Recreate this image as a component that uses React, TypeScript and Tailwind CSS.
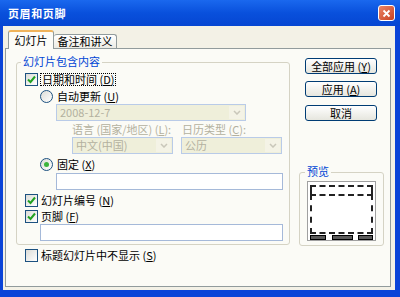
import React from "react";

const font = { fontFamily: '"Noto Sans CJK SC", "Noto Sans", sans-serif' };

function Check({ checked }: { checked?: boolean }) {
  return (
    <span className="flex h-[13px] w-[13px] shrink-0 items-center justify-center border border-[#1c5180] bg-gradient-to-br from-[#dcdcd7] to-white">
      {checked && (
        <svg width="9" height="9" viewBox="0 0 9 9">
          <path d="M1 4.5 L3.5 7 L8 1.5" fill="none" stroke="#21a121" strokeWidth="2" />
        </svg>
      )}
    </span>
  );
}

function Radio({ checked }: { checked?: boolean }) {
  return (
    <span className="flex h-[13px] w-[13px] shrink-0 items-center justify-center rounded-full border border-[#1c5180] bg-gradient-to-br from-[#dcdcd7] to-white">
      {checked && <span className="h-[5px] w-[5px] rounded-full bg-[#3cb43c]" />}
    </span>
  );
}

function Select({ value, className }: { value: string; className: string }) {
  return (
    <div className={`flex h-[17px] shrink-0 items-center border border-[#b9cbe8] bg-[#efefda] ${className}`}>
      <span className="flex-1 pl-[3px] text-[11px] leading-none text-[#b3b19f]">{value}</span>
      <span className="mr-[1px] flex h-[13px] w-[15px] items-center justify-center bg-[#f4f3e6]">
        <svg width="8" height="5" viewBox="0 0 8 5">
          <path d="M1 1 L4 4 L7 1" fill="none" stroke="#c9c7ba" strokeWidth="1.5" />
        </svg>
      </span>
    </div>
  );
}

function Button({ children, className }: { children: React.ReactNode; className: string }) {
  return (
    <div
      className={`flex h-[16px] w-[72px] items-center justify-center rounded-[3px] border border-[#003c74] bg-gradient-to-b from-white to-[#e6e6de] text-[11px] leading-none text-black ${className}`}
    >
      {children}
    </div>
  );
}

function Row({ children, className }: { children: React.ReactNode; className: string }) {
  return <div className={`flex h-[13px] shrink-0 items-center gap-[2px] ${className}`}>{children}</div>;
}

const Label = ({ children }: { children: React.ReactNode }) => (
  <span className="whitespace-nowrap text-[11px] leading-none text-black">{children}</span>
);

export default function App() {
  return (
    <div style={font} className="flex h-[297px] w-[400px] flex-col bg-[#0a44d8]">
      {/* Title bar */}
      <div className="flex h-[26px] shrink-0 items-center justify-between bg-gradient-to-b from-[#1a68ee] via-[#0950dc] to-[#0646d2] pl-[8px] pr-[5px]">
        <span className="text-[11px] font-bold leading-none tracking-[0.6px] text-white">页眉和页脚</span>
        <div className="flex h-[16px] w-[17px] items-center justify-center rounded-[3px] border border-white bg-gradient-to-br from-[#ea8466] to-[#c8401e]">
          <svg width="9" height="9" viewBox="0 0 9 9">
            <path d="M1.5 1.5 L7.5 7.5 M7.5 1.5 L1.5 7.5" stroke="white" strokeWidth="1.8" />
          </svg>
        </div>
      </div>

      {/* Body */}
      <div className="mb-[7px] ml-[3px] mr-[5px] flex flex-1 flex-col bg-[#f3f1e6] pl-[2px] pr-[1px] pt-[4px]">
        {/* Tabs */}
        <div className="flex h-[18px] shrink-0 items-end pl-[3px]">
          <div className="relative z-10 -mb-[1px] flex h-[19px] w-[46px] items-center justify-center rounded-t-[3px] border border-b-0 border-t-2 border-[#919b9c] border-t-[#f0b35a] bg-[#fcfcf8] text-[11px] leading-none">
            幻灯片
          </div>
          <div className="flex h-[14px] w-[63px] items-center justify-center rounded-t-[3px] border border-b-0 border-l-0 border-[#919b9c] bg-gradient-to-b from-white to-[#ecebe4] text-[11px] leading-none">
            备注和讲义
          </div>
        </div>

        {/* Tab panel */}
        <div className="flex h-[239px] w-[386px] shrink-0 border border-[#919b9c] bg-[#fbfbf6] pl-[10px]">
          {/* Left column */}
          <div className="flex w-[274px] shrink-0 flex-col">
            <div className="relative mt-[13px] flex h-[183px] shrink-0 flex-col rounded-[3px] border border-[#d5d3c4]">
              <span className="absolute -top-[7px] left-[4px] bg-[#fbfbf6] px-[2px] text-[11px] leading-none text-[#0046d5]">
                幻灯片包含内容
              </span>
              <Row className="ml-[8px] mt-[10px]">
                <Check checked />
                <span className="border border-dotted border-black px-[1px] text-[11px] leading-[11px]">
                  日期和时间 (<u>D</u>)
                </span>
              </Row>
              <Row className="ml-[23px] mt-[4px] gap-[4px]">
                <Radio />
                <Label>
                  自动更新 (<u>U</u>)
                </Label>
              </Row>
              <Select value="2008-12-7" className="ml-[39px] mt-[1px] w-[190px]" />
              <div className="ml-[55px] mt-[2px] flex h-[12px] shrink-0 items-center text-[11px] leading-none text-[#b3b19f]">
                <span className="w-[110px] whitespace-nowrap">语言 (国家/地区) (<u>L</u>):</span>
                <span className="whitespace-nowrap">日历类型 (<u>C</u>):</span>
              </div>
              <div className="ml-[55px] mt-[2px] flex gap-[8px]">
                <Select value="中文(中国)" className="w-[101px]" />
                <Select value="公历" className="w-[101px]" />
              </div>
              <Row className="ml-[23px] mt-[4px] gap-[4px]">
                <Radio checked />
                <Label>
                  固定 (<u>X</u>)
                </Label>
              </Row>
              <div className="ml-[39px] mt-[2px] h-[17px] w-[227px] shrink-0 border border-[#a5b9d9] bg-white" />
              <Row className="ml-[8px] mt-[4px] gap-[3px]">
                <Check checked />
                <Label>
                  幻灯片编号 (<u>N</u>)
                </Label>
              </Row>
              <Row className="ml-[8px] mt-[3px] gap-[3px]">
                <Check checked />
                <Label>
                  页脚 (<u>F</u>)
                </Label>
              </Row>
              <div className="ml-[23px] mt-[1px] h-[17px] w-[243px] shrink-0 border border-[#a5b9d9] bg-white" />
            </div>
            <Row className="ml-[9px] mt-[4px] gap-[3px]">
              <Check />
              <Label>
                标题幻灯片中不显示 (<u>S</u>)
              </Label>
            </Row>
          </div>

          {/* Right column */}
          <div className="flex flex-col">
            <Button className="ml-[15px] mt-[9px]">
              全部应用 (<u>Y</u>)
            </Button>
            <Button className="ml-[15px] mt-[7px]">
              应用 (<u>A</u>)
            </Button>
            <Button className="ml-[15px] mt-[8px]">取消</Button>
            <div className="relative ml-[9px] mt-[51px] h-[74px] w-[85px] shrink-0 rounded-[3px] border border-[#d5d3c4]">
              <span className="absolute -top-[7px] left-[5px] bg-[#fbfbf6] px-[2px] text-[11px] leading-none text-[#0046d5]">
                预览
              </span>
              <div className="ml-[7px] mt-[8px] flex h-[60px] w-[69px] flex-col border border-[#a0a0a0] bg-white px-[2px] pt-[3px]">
                <div className="h-[9px] border-2 border-b-0 border-dashed border-[#222]" />
                <div className="h-[40px] border-2 border-dashed border-[#222]" />
                <div className="mt-[1px] flex justify-between">
                  <span className="h-[5px] w-[16px] border border-black bg-[#5a5a5a]" />
                  <span className="h-[5px] w-[21px] border border-black bg-[#5a5a5a]" />
                  <span className="h-[5px] w-[15px] border border-black bg-[#5a5a5a]" />
                </div>
              </div>
            </div>
          </div>
        </div>
      </div>
    </div>
  );
}
